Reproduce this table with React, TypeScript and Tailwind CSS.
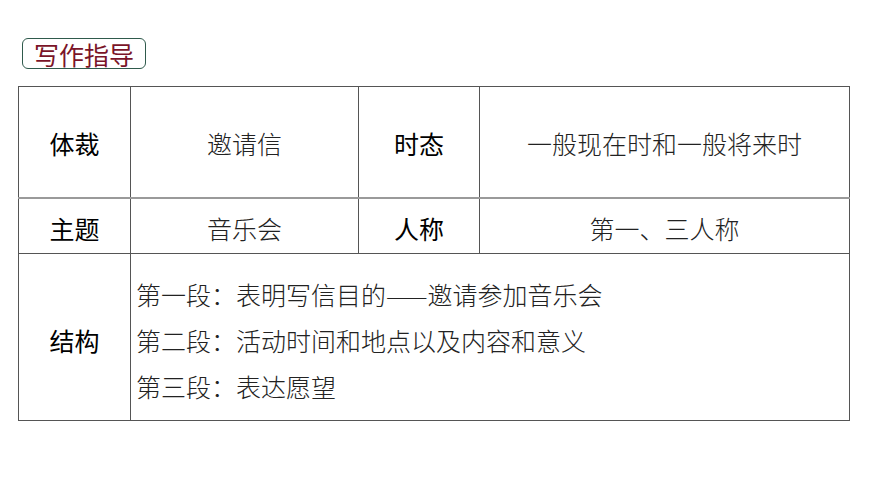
import React from 'react';

const font = { fontFamily: '"Noto Sans CJK SC", "Noto Sans", sans-serif' };

const lines = ['第一段：表明写信目的——邀请参加音乐会', '第二段：活动时间和地点以及内容和意义', '第三段：表达愿望'];

export default function App() {
  return (
    <div className="h-[489px] w-[870px] bg-white" style={font}>
      <div className="pl-[22px] pt-[38px]">
        <div className="flex h-[31px] w-[124px] items-center justify-center rounded-[6px] border border-[#2f5a4c] pt-[1px] text-[25px] leading-none text-[#7a1428]">
          写作指导
        </div>
      </div>

      <table className="ml-[18px] mt-[17px] w-[831px] table-fixed border-collapse text-[25px] leading-none">
        <colgroup>
          <col className="w-[112px]" />
          <col className="w-[228px]" />
          <col className="w-[121px]" />
          <col className="w-[370px]" />
        </colgroup>
        <tbody>
          <tr className="h-[111px] border-b-2 border-[#9a9a9a]">
            <td className="border border-[#555] pt-[4px] text-center font-normal text-black">体裁</td>
            <td className="border border-[#555] pt-[4px] text-center font-light text-[#222]">邀请信</td>
            <td className="border border-[#555] pt-[4px] text-center font-normal text-black">时态</td>
            <td className="border border-[#555] pt-[4px] text-center font-light text-[#222]">一般现在时和一般将来时</td>
          </tr>
          <tr className="h-[56px] border-b border-[#555]">
            <td className="border-x border-[#555] pt-[5px] text-center font-normal text-black">主题</td>
            <td className="border-x border-[#555] pt-[5px] text-center font-light text-[#222]">音乐会</td>
            <td className="border-x border-[#555] pt-[5px] text-center font-normal text-black">人称</td>
            <td className="border-x border-[#555] pt-[5px] text-center font-light text-[#222]">第一、三人称</td>
          </tr>
          <tr className="h-[167px]">
            <td className="border border-[#555] pt-[6px] text-center font-normal text-black">结构</td>
            <td colSpan={3} className="border border-[#555] pl-[5px] font-light text-[#222]">
              <div className="flex flex-col gap-[21px] pt-[6px]">
                {lines.map((l) => (
                  <div key={l}>{l}</div>
                ))}
              </div>
            </td>
          </tr>
        </tbody>
      </table>
    </div>
  );
}
